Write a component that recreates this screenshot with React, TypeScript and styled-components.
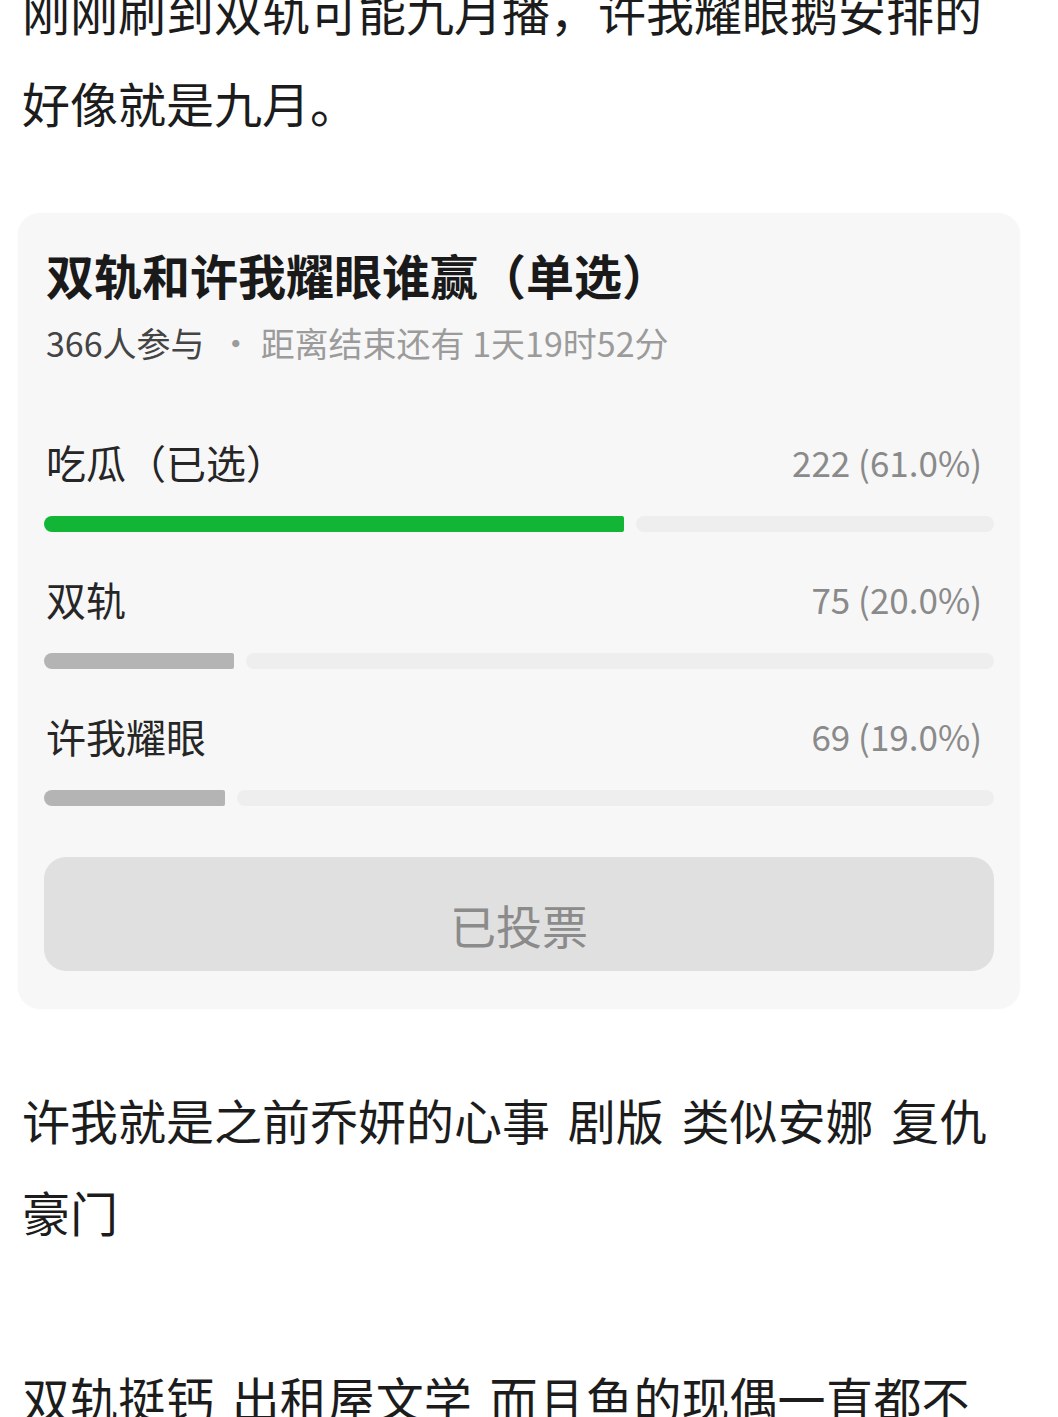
import React from 'react';
import styled, {createGlobalStyle} from 'styled-components';

const GlobalStyle = createGlobalStyle`
  html, body {
    margin: 0;
    padding: 0;
    background: #ffffff;
  }
  body {
    font-family: "Noto Sans CJK SC", "Noto Sans", sans-serif;
    overflow: hidden;
  }
`;

interface PollOption {
  key: string;
  label: string;
  votes: number;
  percent: number;
  selected?: boolean;
}

const options: PollOption[] = [
  {key: 'a', label: '吃瓜（已选）', votes: 222, percent: 61.0, selected: true},
  {key: 'b', label: '双轨', votes: 75, percent: 20.0},
  {key: 'c', label: '许我耀眼', votes: 69, percent: 19.0}
];

const Page = styled.div`
  width: 980px;
  padding: 0 56px 0 22px;
  height: 1417px;
  overflow: hidden;
`;

const Paragraph = styled.p<{$gap: number}>`
  margin: ${(p) => p.$gap}px 0 0;
  font-size: 48px;
  line-height: 92px;
  color: #1c1c1c;
  word-spacing: 7px;
`;

const PollCard = styled.section`
  margin: 65px 0 0 -4px;
  width: 1002px;
  box-sizing: border-box;
  padding: 31px 26px 38px;
  background: #f7f7f7;
  border-radius: 22px;
  box-shadow: 0 0 2px rgba(0, 0, 0, 0.03);
`;

const PollTitle = styled.h2`
  margin: 0;
  padding-left: 2px;
  font-size: 48px;
  line-height: 60px;
  font-weight: 700;
  color: #1a1a1a;
`;

const PollMeta = styled.div`
  margin-top: 16px;
  padding-left: 2px;
  font-size: 34px;
  line-height: 46px;
  color: #9b9b9b;
  display: flex;
  align-items: center;
`;

const MetaCount = styled.span`
  color: #444444;
`;

const MetaDot = styled.span`
  margin: 0 8px 0 14px;
`;

const OptionList = styled.div`
  margin-top: 69px;
  display: flex;
  flex-direction: column;
  gap: 40px;
`;

const OptionItem = styled.div`
  display: flex;
  flex-direction: column;
  gap: 27px;
`;

const OptionHead = styled.div`
  display: flex;
  align-items: center;
  justify-content: space-between;
  padding: 0 12px 0 2px;
  height: 54px;
`;

const OptionLabel = styled.span`
  font-size: 40px;
  line-height: 54px;
  color: #262626;
`;

const OptionValue = styled.span`
  font-size: 35px;
  line-height: 54px;
  color: #8a8a8a;
`;

const BarRow = styled.div`
  display: flex;
  height: 16px;
`;

const BarFill = styled.div<{$selected?: boolean}>`
  height: 100%;
  border-radius: 8px 2px 2px 8px;
  background: ${(p) => (p.$selected ? '#12b536' : '#b4b4b4')};
`;

const BarTrack = styled.div`
  flex: 1;
  margin-left: 12px;
  height: 100%;
  border-radius: 8px;
  background: #efeeef;
`;

const VotedButton = styled.button`
  margin-top: 51px;
  width: 100%;
  height: 114px;
  border: none;
  border-radius: 22px;
  background: #e0e0e0;
  color: #8b8b8b;
  font-family: inherit;
  font-size: 46px;
  line-height: 60px;
  padding: 20px 0 0;
  display: flex;
  align-items: center;
  justify-content: center;
`;

const App = () => {
  return (
    <>
      <GlobalStyle />
      <Page>
        <Paragraph $gap={-36}>
          刚刚刷到双轨可能九月播，许我耀眼鹅安排的好像就是九月。
        </Paragraph>

        <PollCard>
          <PollTitle>双轨和许我耀眼谁赢（单选）</PollTitle>
          <PollMeta>
            <MetaCount>366人参与</MetaCount>
            <MetaDot>·</MetaDot>
            <span>距离结束还有 1天19时52分</span>
          </PollMeta>

          <OptionList>
            {options.map((opt) => (
              <OptionItem key={opt.key}>
                <OptionHead>
                  <OptionLabel>{opt.label}</OptionLabel>
                  <OptionValue>
                    {opt.votes} ({opt.percent.toFixed(1)}%)
                  </OptionValue>
                </OptionHead>
                <BarRow>
                  <BarFill
                    $selected={opt.selected}
                    style={{width: `${opt.percent}%`}}
                  />
                  <BarTrack />
                </BarRow>
              </OptionItem>
            ))}
          </OptionList>

          <VotedButton disabled>已投票</VotedButton>
        </PollCard>

        <Paragraph $gap={64}>
          许我就是之前乔妍的心事 剧版 类似安娜 复仇豪门
        </Paragraph>
        <Paragraph $gap={94}>
          双轨挺钙 出租屋文学 而且鱼的现偶一直都不错
        </Paragraph>
      </Page>
    </>
  );
};

export default App;
